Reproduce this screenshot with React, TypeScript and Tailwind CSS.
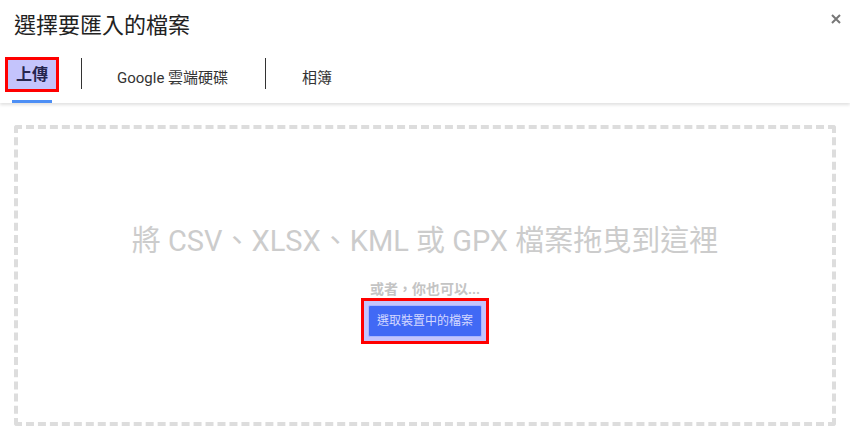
import React from 'react';

const font = { fontFamily: 'Roboto, "Noto Sans CJK TC", sans-serif' };

const App = () => {
  return (
    <div className="w-[850px] h-[438px] bg-white relative overflow-hidden" style={font}>
      <div className="relative z-10 bg-white shadow-[0_2px_3px_rgba(0,0,0,0.12)]">
        <div className="flex items-start justify-between pl-[14px] pr-[9px] pt-[10px] h-[57px]">
          <h1 className="text-[22px] leading-[32px] text-[#222]">選擇要匯入的檔案</h1>
          <button className="mt-[4px]">
            <svg width="10" height="10" viewBox="0 0 10 10">
              <path d="M1 1 L9 9 M9 1 L1 9" stroke="#777" strokeWidth="2" />
            </svg>
          </button>
        </div>
        <div className="flex items-start h-[46px]">
          <div className="ml-[5px] flex flex-col items-center">
            <div className="w-[54px] h-[35px] border-[3px] border-[#ff0000] bg-[#c4c4fc] flex items-center justify-center">
              <span className="text-[16px] font-bold text-[#262650] leading-none">上傳</span>
            </div>
            <div className="mt-[8px] w-[40px] h-[3px] bg-[#4d8ff5]" />
          </div>
          <div className="ml-[22px] mt-[1px] w-px h-[31px] bg-[#333]" />
          <div className="ml-[35px] mt-[11px] text-[15px] leading-[20px] text-[#333]">Google 雲端硬碟</div>
          <div className="ml-[37px] mt-[1px] w-px h-[31px] bg-[#333]" />
          <div className="ml-[36px] mt-[11px] text-[15px] leading-[20px] text-[#333]">相簿</div>
        </div>
      </div>
      <div className="px-[14px] pt-[22px]">
        <div className="h-[301px] border-4 border-dashed border-[#dddddd] rounded-[3px] flex flex-col items-center pt-[92px]">
          <div className="text-[29px] leading-[40px] text-[#cccccc]">將 CSV、XLSX、KML 或 GPX 檔案拖曳到這裡</div>
          <div className="mt-[19px] text-[14px] leading-[18px] font-bold text-[#c4c4c4]">或者，你也可以...</div>
          <div className="border-[3px] border-[#ff0000] bg-[#c4c4fc] p-[4px]">
            <button className="h-[32px] px-[8px] bg-[#4169f5] border border-[#a9b6ff] rounded-[2px] text-[12px] text-[#d4d8ff]">
              選取裝置中的檔案
            </button>
          </div>
        </div>
      </div>
    </div>
  );
};

export default App;
